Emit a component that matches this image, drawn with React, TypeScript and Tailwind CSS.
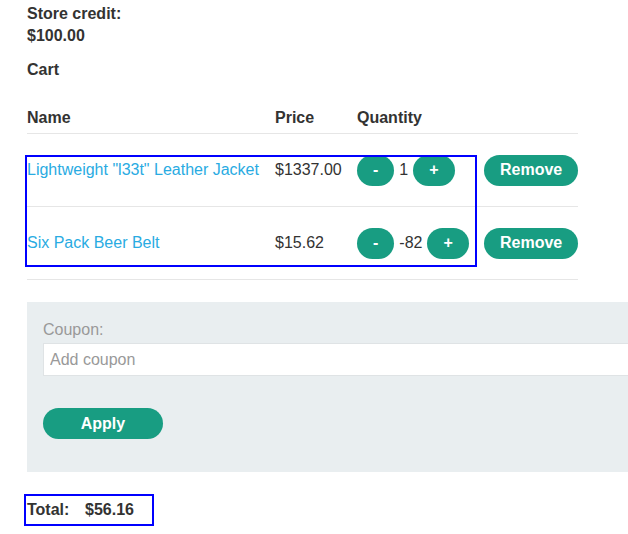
import React from "react";

const items = [
  { name: 'Lightweight "l33t" Leather Jacket', price: "$1337.00", qty: 1 },
  { name: "Six Pack Beer Belt", price: "$15.62", qty: -82 },
];

const btn =
  "h-[31px] px-4 rounded-full bg-[#189d82] text-white font-bold text-base leading-none";

const App = () => {
  return (
    <div className="w-[628px] h-[534px] overflow-hidden bg-white text-[#333332] font-['Liberation_Sans',Arial,sans-serif] text-base">
      <div className="pl-[27px] pt-[3px]">
        <p className="font-bold leading-[22px]">Store credit:</p>
        <p className="font-bold leading-[22px]">$100.00</p>
        <p className="font-bold leading-[22px] mt-[12px]">Cart</p>

        <div className="relative mt-[20px] w-[551px]">
          <div className="grid grid-cols-[248px_82px_127px_94px] h-[33px] pt-[2px] items-center border-b border-[#e6e6e6] font-bold">
            <span>Name</span>
            <span>Price</span>
            <span>Quantity</span>
            <span></span>
          </div>
          {items.map((it) => (
            <div
              key={it.name}
              className="grid grid-cols-[248px_82px_127px_94px] h-[73px] items-center border-b border-[#e6e6e6]"
            >
              <a className="text-[#29abe2] cursor-pointer">{it.name}</a>
              <span>{it.price}</span>
              <div className="flex items-center gap-[5px]">
                <button className={btn}>-</button>
                <span>{it.qty}</span>
                <button className={btn}>+</button>
              </div>
              <button className={btn + " w-[94px]"}>Remove</button>
            </div>
          ))}
          {/* highlight overlay */}
          <div className="absolute left-[-2px] top-[54px] w-[452px] h-[112px] border-2 border-[#0000ff] pointer-events-none"></div>
        </div>

        <div className="mt-[22px] w-[640px] h-[170px] bg-[#e9eef0] pl-4 pt-[17px]">
          <label className="block text-[#999999] leading-[22px]">Coupon:</label>
          <input
            placeholder="Add coupon"
            className="mt-[2px] block w-full h-[33px] bg-white border border-[#dfe3e5] px-[6px] placeholder:text-[#999999] outline-none"
          />
          <button className={btn + " mt-[32px] w-[120px]"}>Apply</button>
        </div>

        <div className="mt-[22px] -ml-[3px] w-[130px] h-[32px] border-2 border-[#0000ff] flex items-center pl-[1px] font-bold">
          <span className="w-[58px]">Total:</span>
          <span>$56.16</span>
        </div>
      </div>
    </div>
  );
};

export default App;
